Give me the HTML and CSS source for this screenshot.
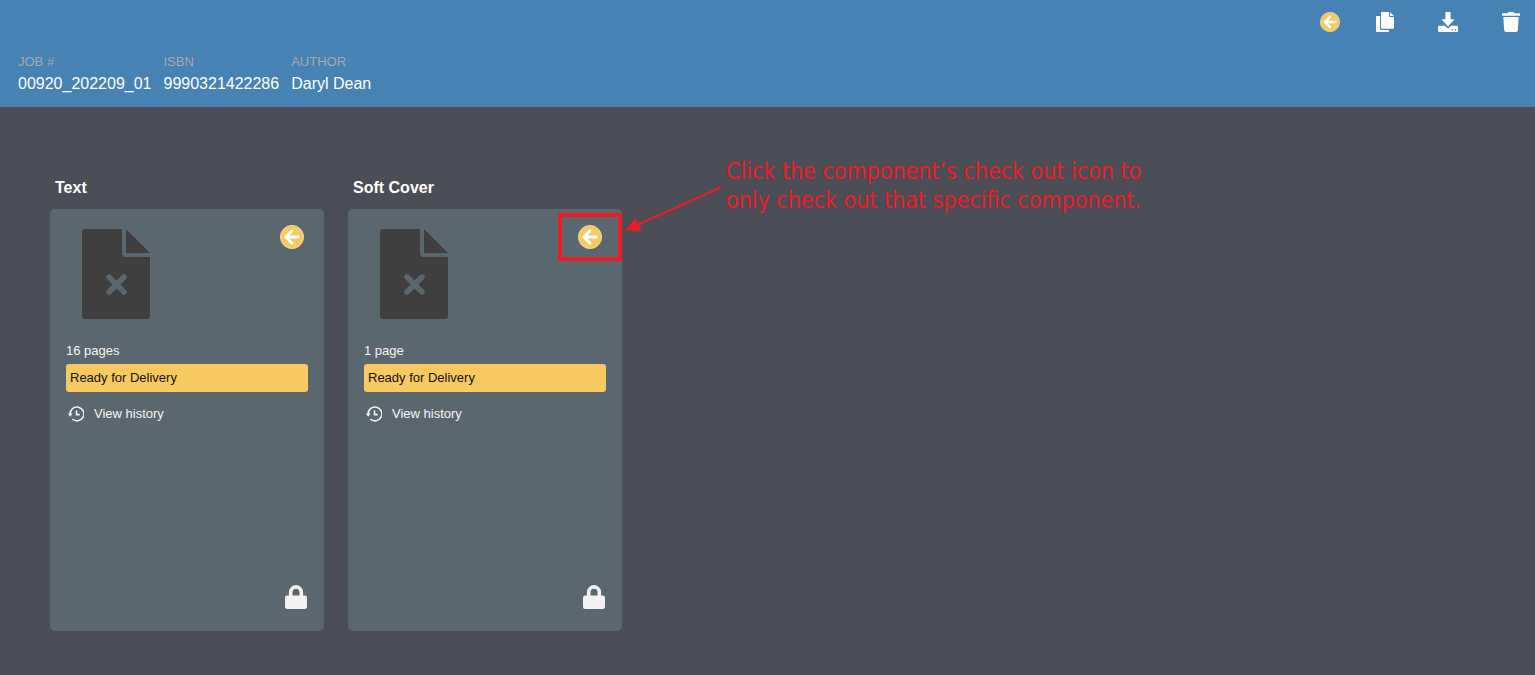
FILE: index.html
```html
<!DOCTYPE html>
<html lang="en">
<head>
<meta charset="utf-8">
<title>Job 00920_202209_01</title>
<link rel="stylesheet" href="styles.css">
</head>
<body>
<svg class="symbols" aria-hidden="true">
  <symbol id="i-back" viewBox="0 0 24 24">
    <circle cx="12" cy="12" r="11.6" fill="#f6ca61" stroke="#f7e3b0" stroke-width=".8"/>
    <path d="M18.3 12H6.3M12 5.8 5.9 12l6.1 6.2" fill="none" stroke="#fff" stroke-width="2.8" stroke-linecap="round" stroke-linejoin="miter"/>
  </symbol>
  <symbol id="i-file" viewBox="0 0 68 90">
    <path fill="#3f3f3f" d="M3 0h37v24a4 4 0 0 0 4 4h24v59a3 3 0 0 1-3 3H3a3 3 0 0 1-3-3V3a3 3 0 0 1 3-3z"/>
    <path fill="#3f3f3f" d="M44 0 68 24H44z"/>
    <path d="m27 48 15 15M42 48 27 63" stroke="#5b676f" stroke-width="5.4" stroke-linecap="round"/>
  </symbol>
  <symbol id="i-history" viewBox="0 0 16 16">
    <path d="M2.1 8.200A6.900 6.900 0 1 1 4.300 13" fill="none" stroke="#f0f0f0" stroke-width="1.600"/>
    <path d="M-.2 7.600h4.800L2.200 10.700z" fill="#f0f0f0"/>
    <path d="M8.500 4.600v4h3.300" fill="none" stroke="#f0f0f0" stroke-width="1.600"/>
  </symbol>
  <symbol id="i-lock" viewBox="0 0 22 24">
    <path d="M5.7 13V7.2a5.3 5.3 0 0 1 10.6 0V13" fill="none" stroke="#f2f2f2" stroke-width="3.6"/>
    <rect y="10.6" width="22" height="13.4" rx="2.2" fill="#f2f2f2"/>
  </symbol>
</svg>

<header class="header">
  <div class="toolbar">
    <button class="tool" aria-label="Check out job"><svg width="20" height="20"><use href="#i-back"/></svg></button>
    <button class="tool" aria-label="Copy"><svg width="18" height="20" viewBox="0 0 18 20" fill="#fff">
      <path d="M1 4h3v12.5A1.5 1.5 0 0 0 5.500 18H13v1a1 1 0 0 1-1 1H1a1 1 0 0 1-1-1V5a1 1 0 0 1 1-1z"/>
      <path d="M6 0h7v4.200a.8.8 0 0 0 .8.8H18v10.800a1 1 0 0 1-1 1H6a1 1 0 0 1-1-1V1a1 1 0 0 1 1-1z"/>
      <path d="M14 0 18 4H14z"/></svg></button>
    <button class="tool tool-spaced" aria-label="Download"><svg width="20" height="20" viewBox="0 0 20 20" fill="#fff">
      <path d="M8 0h4a.6.6 0 0 1 .6.600V7.300H16.400L10 14.400 3.600 7.300H7.400V.6A.6.6 0 0 1 8 0z"/>
      <path fill-rule="evenodd" d="M1 13.800h5.800L10 16.600l3.200-2.800H19a1 1 0 0 1 1 1V19a1 1 0 0 1-1 1H1a1 1 0 0 1-1-1v-4.200a1 1 0 0 1 1-1zM13.600 17.200v1.300h1.500v-1.300zM16.600 17.200v1.300h1.500v-1.300z"/></svg></button>
    <button class="tool tool-spaced" aria-label="Delete"><svg width="18" height="20" viewBox="0 0 18 20" fill="#fff">
      <path d="M6.500 0h5l.8 1.300H17.300a.7.700 0 0 1 .7.700V3.800H0V2a.7.700 0 0 1 .7-.7H5.700z"/>
      <path d="M1.300 5h15.400l-.9 13.300A1.800 1.800 0 0 1 14 20H4a1.800 1.800 0 0 1-1.800-1.700z"/></svg></button>
  </div>
  <dl class="fields">
    <div><dt>JOB #</dt><dd>00920_202209_01</dd></div>
    <div><dt>ISBN</dt><dd>9990321422286</dd></div>
    <div><dt>AUTHOR</dt><dd>Daryl Dean</dd></div>
  </dl>
</header>

<main class="board">
  <div class="components">
    <section class="component">
      <h2>Text</h2>
      <article class="card">
        <div class="card-top">
          <svg class="file" width="68" height="90"><use href="#i-file"/></svg>
          <button class="checkout" aria-label="Check out Text"><svg width="24" height="24"><use href="#i-back"/></svg></button>
        </div>
        <p class="pages">16 pages</p>
        <p class="status">Ready for Delivery</p>
        <button class="history"><svg width="16" height="16"><use href="#i-history"/></svg>View history</button>
        <svg class="lock" width="22" height="24"><use href="#i-lock"/></svg>
      </article>
    </section>
    <section class="component">
      <h2>Soft Cover</h2>
      <article class="card">
        <div class="card-top">
          <svg class="file" width="68" height="90"><use href="#i-file"/></svg>
          <button class="checkout highlighted" aria-label="Check out Soft Cover"><svg width="24" height="24"><use href="#i-back"/></svg></button>
        </div>
        <p class="pages">1 page</p>
        <p class="status">Ready for Delivery</p>
        <button class="history"><svg width="16" height="16"><use href="#i-history"/></svg>View history</button>
        <svg class="lock" width="22" height="24"><use href="#i-lock"/></svg>
      </article>
    </section>
  </div>
  <aside class="note">
    <svg class="pointer" width="96" height="48" viewBox="0 0 96 48">
      <path d="M94.500 .6 12 37.500" stroke="#ed1c24" stroke-width="2"/>
      <path d="M-1 43.600 9.500 31l6 13z" fill="#ed1c24"/>
    </svg>
    <p>Click the component’s check out icon to<br>only check out that specific component.</p>
  </aside>
</main>
</body>
</html>
```

FILE: styles.css
```css
* {
  box-sizing: border-box;
}

body {
  margin: 0;
  min-height: 100vh;
  background: #4b4e56;
  color: #fff;
  font-family: "Liberation Sans", Arial, sans-serif;
  font-size: 13px;
}

h2, p, dl, dd {
  margin: 0;
}

button {
  padding: 0;
  border: 0;
  background: none;
  color: inherit;
  font: inherit;
  cursor: pointer;
}

svg {
  display: block;
}

.symbols {
  position: absolute;
  width: 0;
  height: 0;
}

.header {
  padding: 12px 15px 13px 18px;
  background: #4682b4;
}

.toolbar {
  display: flex;
  justify-content: flex-end;
  gap: 36px;
}

.tool-spaced {
  margin-left: 8px;
}

.fields {
  display: flex;
  gap: 12px;
  margin-top: 22px;
}

.fields dt {
  color: #a9a9a9;
  line-height: 16px;
}

.fields dd {
  margin-top: 4px;
  font-size: 16px;
  line-height: 20px;
}

.board {
  display: flex;
  align-items: flex-start;
  padding: 71px 50px 44px;
}

.components {
  display: flex;
  gap: 24px;
}

.component {
  width: 274px;
}

.component h2 {
  padding-left: 5px;
  margin-bottom: 11px;
  font-size: 16px;
  line-height: 20px;
}

.card {
  display: flex;
  flex-direction: column;
  min-height: 422px;
  padding: 20px 16px;
  border-radius: 5px;
  background: #5b676f;
}

.card-top {
  display: flex;
  justify-content: space-between;
  align-items: flex-start;
  padding: 0 4px 0 16px;
}

.checkout {
  position: relative;
  margin-top: -4px;
}

/* Callout frame drawn over the card's edge */
.highlighted::after {
  content: "";
  position: absolute;
  inset: -12px -20px;
  border: 4px solid #ed1c24;
  border-radius: 2px;
}

.pages {
  margin-top: 22px;
  color: #f5f5f5;
  line-height: 20px;
}

.status {
  margin-top: 3px;
  padding: 4px;
  border-radius: 3px;
  background: #f6ca61;
  color: #111;
  line-height: 20px;
}

.history {
  display: flex;
  align-items: center;
  align-self: flex-start;
  gap: 10px;
  margin-top: 12px;
  padding-left: 2px;
  color: #f5f5f5;
  line-height: 20px;
}

.history svg {
  overflow: visible;
}

.lock {
  align-self: flex-end;
  margin: auto 1px 2px;
}

.note {
  display: flex;
  gap: 4px;
  padding-left: 4px;
  color: #ed1c24;
}

.pointer {
  flex: none;
  margin-top: 9px;
  overflow: visible;
}

.note p {
  margin-top: -21px;
  font-family: Tahoma, "DejaVu Sans Condensed", "Noto Sans", sans-serif;
  font-size: 23px;
  line-height: 29px;
}
```
